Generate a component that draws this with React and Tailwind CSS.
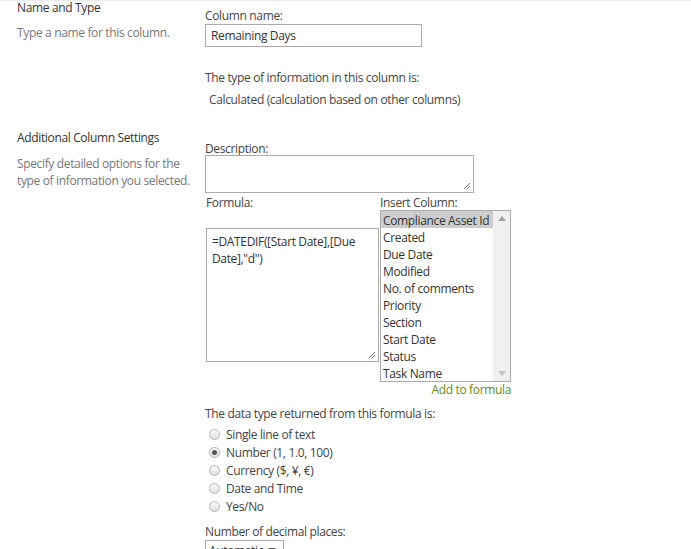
import React from 'react'

const columns = [
  'Compliance Asset Id',
  'Created',
  'Due Date',
  'Modified',
  'No. of comments',
  'Priority',
  'Section',
  'Start Date',
  'Status',
  'Task Name',
]

const types = [
  { label: 'Single line of text', checked: false },
  { label: 'Number (1, 1.0, 100)', checked: true },
  { label: 'Currency ($, ¥, €)', checked: false },
  { label: 'Date and Time', checked: false },
  { label: 'Yes/No', checked: false },
]

function Grip() {
  return (
    <svg width="8" height="8" viewBox="0 0 8 8" className="absolute right-[2px] bottom-[2px]">
      <line x1="1" y1="7" x2="7" y2="1" stroke="#777" strokeWidth="1" />
      <line x1="4" y1="7" x2="7" y2="4" stroke="#777" strokeWidth="1" />
    </svg>
  )
}

function Radio({ checked }) {
  return (
    <span className="w-[11px] h-[11px] rounded-full border border-[#b3b3b3] bg-gradient-to-b from-[#fafafa] to-[#e0e0e0] flex items-center justify-center">
      {checked && <span className="w-[5px] h-[5px] rounded-full bg-[#555]" />}
    </span>
  )
}

function App() {
  return (
    <div className="w-[691px] h-[549px] overflow-hidden bg-white border-t border-[#ececec] text-[12px] leading-[17px] tracking-[-0.35px] text-[#444] font-['Open_Sans',sans-serif]">
      {/* Name and Type */}
      <div className="flex h-[128px]">
        <div className="w-[205px] pl-[17px] -mt-[2px]">
          <div className="text-[#333]">Name and Type</div>
          <div className="mt-[8px] text-[#777]">Type a name for this column.</div>
        </div>
        <div className="pt-[6px]">
          <div>Column name:</div>
          <div className="w-[217px] h-[23px] border border-[#ababab] px-[5px] leading-[21px] text-[#333]">Remaining Days</div>
          <div className="mt-[22px]">The type of information in this column is:</div>
          <div className="mt-[5px] pl-[4px]">Calculated (calculation based on other columns)</div>
        </div>
      </div>

      {/* Additional Column Settings */}
      <div className="flex">
        <div className="w-[205px] pl-[17px]">
          <div className="text-[#333]">Additional Column Settings</div>
          <div className="mt-[9px] text-[#777]">
            Specify detailed options for the
            <br />
            type of information you selected.
          </div>
        </div>
        <div className="pt-[11px]">
          <div>Description:</div>
          <div className="relative w-[269px] h-[38px] border border-[#ababab] -mt-[2px]">
            <Grip />
          </div>
          <div className="flex mt-[1px]">
            <div className="w-[175px] pl-[1px]">
              <div>Formula:</div>
              <div className="relative mt-[17px] w-[173px] h-[134px] border border-[#ababab] px-[5px] pt-[4px] text-[#333]">
                =DATEDIF([Start Date],[Due Date],"d")
                <Grip />
              </div>
            </div>
            <div className="w-[131px]">
              <div>Insert Column:</div>
              <div className="flex h-[172px] border border-[#ababab] -mt-[1px]">
                <div className="flex-1">
                  {columns.map((c, i) => (
                    <div
                      key={c}
                      className={`h-[17px] pl-[2px] pt-[1px] whitespace-nowrap text-[#333] ${i === 0 ? 'bg-[#cdcdcd]' : ''}`}
                    >
                      {c}
                    </div>
                  ))}
                </div>
                <div className="w-[17px] bg-[#f0f0f0] flex flex-col justify-between items-center py-[5px]">
                  <svg width="8" height="5" viewBox="0 0 8 5"><path d="M0 5 L4 0 L8 5 Z" fill="#a3a3a3" /></svg>
                  <svg width="8" height="5" viewBox="0 0 8 5"><path d="M0 0 L4 5 L8 0 Z" fill="#c2c2c2" /></svg>
                </div>
              </div>
              <div className="text-right text-[#5f8c1e] -mt-[1px]">Add to formula</div>
            </div>
          </div>
          <div className="mt-[7px]">The data type returned from this formula is:</div>
          <div className="mt-[3px] pl-[4px]">
            {types.map((t) => (
              <div key={t.label} className="flex items-center gap-[6px] h-[18px]">
                <Radio checked={t.checked} />
                <span>{t.label}</span>
              </div>
            ))}
          </div>
          <div className="mt-[8px]">Number of decimal places:</div>
          <div className="w-[79px] h-[22px] border border-[#ababab] px-[3px] leading-[20px] text-[#333]">Automatic ▼</div>
        </div>
      </div>
    </div>
  )
}

export default App
